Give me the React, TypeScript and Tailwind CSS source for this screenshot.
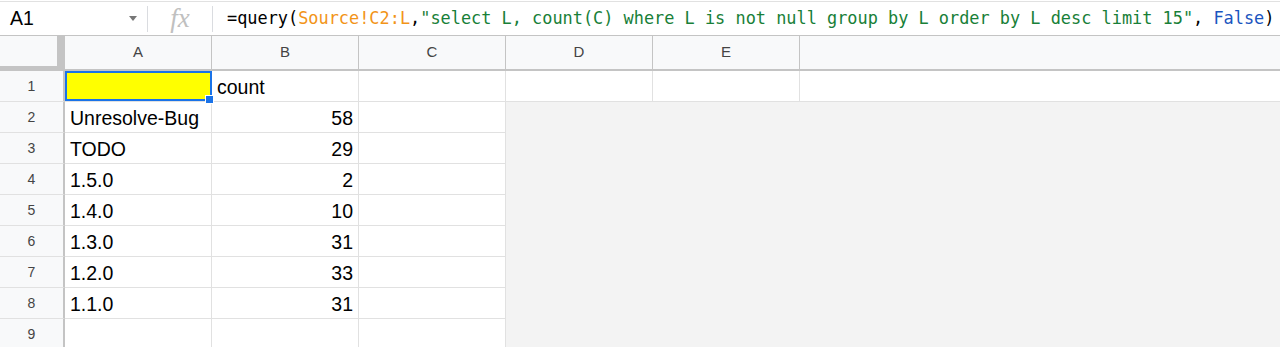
const rows: [string, string][] = [
  ["Unresolve-Bug", "58"],
  ["TODO", "29"],
  ["1.5.0", "2"],
  ["1.4.0", "10"],
  ["1.3.0", "31"],
  ["1.2.0", "33"],
  ["1.1.0", "31"],
  ["", ""],
];

const sans = "font-['Liberation_Sans',Arial,sans-serif]";

function RowHead({ n }: { n: number }) {
  return (
    <div className="w-[65px] shrink-0 bg-[#f8f9fa] border-r-2 border-r-[#c4c4c4] border-b border-b-[#e1e1e1] flex items-center justify-center text-[14px] text-[#444]">
      {n}
    </div>
  );
}

function Cell({ children, right }: { children?: string; right?: boolean }) {
  return (
    <div
      className={
        "w-[147px] shrink-0 border-r border-b border-[#e1e1e1] px-[5px] pt-[3px] flex items-center text-[19.5px] leading-none text-black whitespace-nowrap " +
        (right ? "justify-end" : "")
      }
    >
      {children}
    </div>
  );
}

export default function App() {
  return (
    <div className={"h-[347px] w-[1280px] overflow-hidden bg-white " + sans}>
      {/* formula bar */}
      <div className="mt-[1px] flex h-[35px] items-center border-t border-t-[#e1e1e1] border-b border-b-[#c4c4c4]">
        <div className="flex w-[147px] shrink-0 items-center justify-between pl-[10px] pr-[10px]">
          <span className="text-[19.5px] text-black">A1</span>
          <svg width="8" height="5" viewBox="0 0 8 5">
            <path d="M0 0h8L4 5z" fill="#777" />
          </svg>
        </div>
        <div className="h-[26px] w-px bg-[#dadce0]" />
        <div className="flex w-[64px] shrink-0 items-center justify-center">
          <span className="font-['Liberation_Serif',serif] text-[27px] italic leading-none text-[#c0c0c0]">
            fx
          </span>
        </div>
        <div className="h-[26px] w-px bg-[#dadce0]" />
        <div className="ml-[14px] pt-px whitespace-pre font-['DejaVu_Sans_Mono',monospace] text-[16.9px] text-black">
          =query(<span className="text-[#f29418]">Source!C2:L</span>,
          <span className="text-[#188038]">
            "select L, count(C) where L is not null group by L order by L desc limit 15"
          </span>
          , <span className="text-[#1a55c0]">False</span>)
        </div>
      </div>

      {/* column headers */}
      <div className="flex h-[35px]">
        <div className="w-[65px] shrink-0 bg-[#f8f9fa] border-r-[8px] border-b-[5px] border-[#c4c4c4]" />
        {["A", "B", "C", "D", "E"].map((c) => (
          <div
            key={c}
            className="w-[147px] shrink-0 bg-[#f8f9fa] border-r border-r-[#c4c4c4] border-b-2 border-b-[#c4c4c4] flex items-center justify-center text-[15px] text-[#444]"
          >
            {c}
          </div>
        ))}
        <div className="flex-1 bg-[#f8f9fa] border-b-2 border-b-[#c4c4c4]" />
      </div>

      {/* row 1 */}
      <div className="flex h-[31px]">
        <RowHead n={1} />
        <div className="relative w-[147px] shrink-0 bg-[#ffff00] border-r border-b border-[#e1e1e1]">
          <div className="absolute left-0 top-0 bottom-0 right-[-1px] border-2 border-[#1a73e8]" />
          <div className="absolute right-[-3px] bottom-[-3px] z-10 h-[9px] w-[9px] border border-white bg-[#1a73e8]" />
        </div>
        <Cell>count</Cell>
        <Cell />
        <Cell />
        <Cell />
        <div className="flex-1 border-b border-[#e1e1e1]" />
      </div>

      {rows.map(([a, b], i) => (
        <div key={i} className="flex h-[31px]">
          <RowHead n={i + 2} />
          <Cell>{a}</Cell>
          <Cell right>{b}</Cell>
          <Cell />
          <div className="flex-1 bg-[#f3f3f3]" />
        </div>
      ))}
    </div>
  );
}
